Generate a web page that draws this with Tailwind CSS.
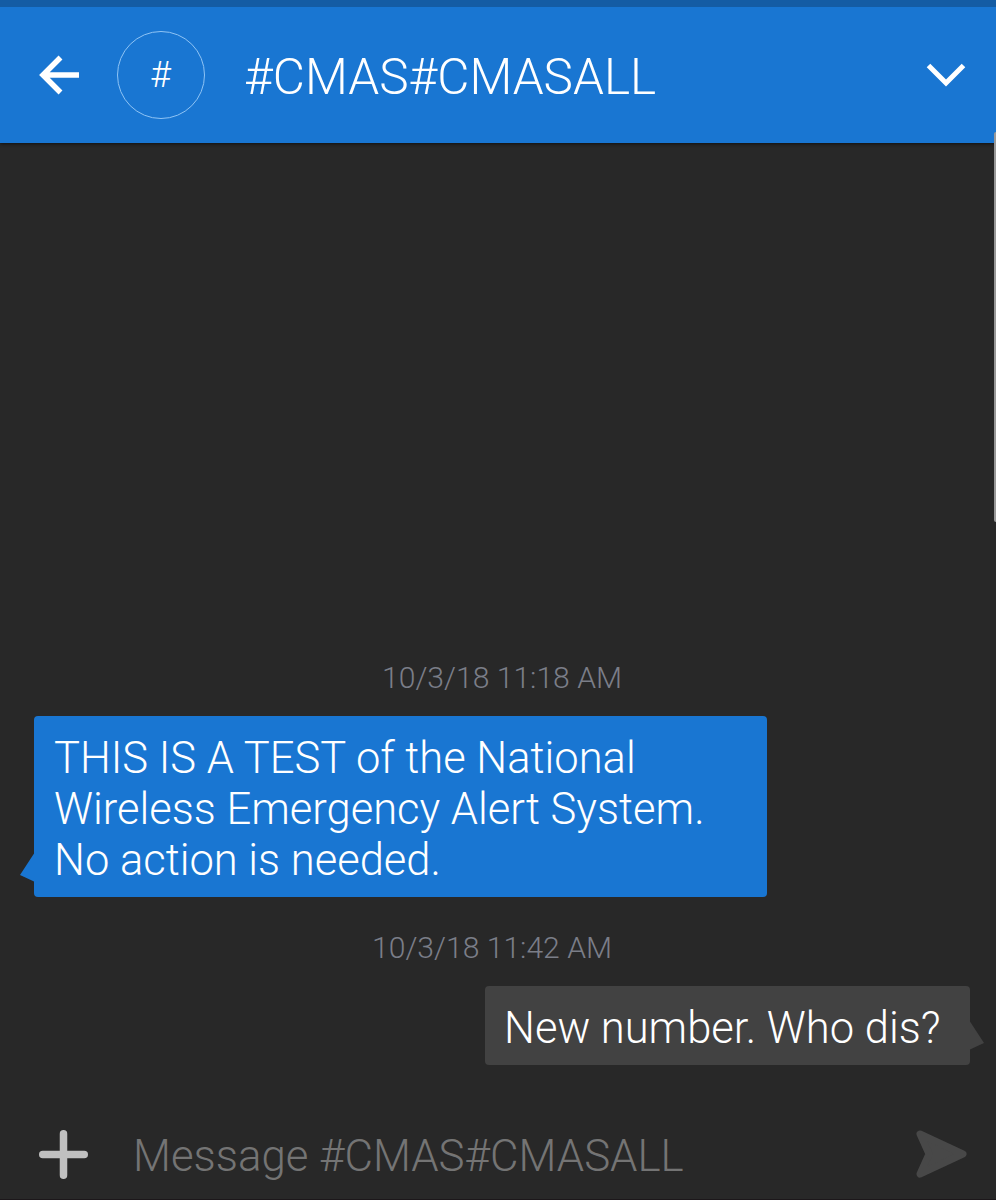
<!DOCTYPE html>
<html lang="en"><head><meta charset="utf-8"><title>Messages</title><script src="https://cdn.jsdelivr.net/npm/@tailwindcss/browser@4"></script></head>
<body class="bg-[#282828]">
<main class="relative flex h-[1200px] w-[996px] flex-col overflow-hidden bg-[#282828] font-['Roboto',sans-serif] font-light text-white">
<header class="flex h-[143px] shrink-0 items-center border-t-[7px] border-[#145ca4] bg-[#1976d2] pl-[39px] pr-[30px] shadow-[0_1px_3px_#111]">
<svg class="h-[40px] w-[40px]" viewBox="0 0 40 40" fill="none" stroke="white" stroke-width="5.500"><path d="M21.5 2.5 4 20l17.500 17.500M4 20h36"/></svg>
<div class="ml-[38px] flex size-[88px] items-center justify-center rounded-full border border-[#8fc4f5] pr-[1px] text-[36px]">#</div>
<h1 class="ml-[39px] pt-[3px] text-[49.500px] leading-[56px]">#CMAS#CMASALL</h1>
<svg class="ml-auto h-[24px] w-[40px]" viewBox="0 0 40 24" fill="none" stroke="white" stroke-width="5"><path d="M2.500 2.500 20 20 37.500 2.500"/></svg>
</header>
<section class="flex flex-1 flex-col">
<time class="mt-[517px] ml-[382px] text-[30.100px] leading-[36px] text-[#7b7e88]">10/3/18 11:18 AM</time>
<div class="relative mt-[20px] ml-[34px] h-[181px] w-[733px] rounded-[4px] bg-[#1976d2] pl-[20px] pt-[17px] text-[43.500px] leading-[51px]">THIS IS A TEST of the National<br>Wireless Emergency Alert System.<br>No action is needed.
<svg class="absolute bottom-[15px] left-[-14px] h-[30px] w-[15px]" viewBox="0 0 15 30"><path d="M15 0V30L14 29.500 0 23Z" fill="#1976d2"/></svg></div>
<time class="mt-[33px] ml-[372px] text-[30.100px] leading-[36px] text-[#7b7e88]">10/3/18 11:42 AM</time>
<div class="relative mt-[20px] ml-[485px] h-[79px] w-[485px] rounded-[4px] bg-[#424242] pl-[19px] pt-[17px] text-[43.500px] leading-[51px]">New number. Who dis?
<svg class="absolute right-[-14px] bottom-[15px] h-[30px] w-[15px]" viewBox="0 0 15 30"><path d="M0 0V30L1 29.500 15 23Z" fill="#424242"/></svg></div>
</section>
<footer class="flex h-[92px] shrink-0 items-center border-b border-[#1c171a] pt-[1px] pl-[39px] pr-[29px]">
<svg class="size-[49px]" viewBox="0 0 49 49" stroke="#c0c0c0" stroke-width="7.500" stroke-linecap="round"><path d="M24.500 3.750v41.500M3.750 24.500h41.500"/></svg>
<p class="ml-[45px] pt-[5px] text-[43.800px] leading-[51px] text-[#747474]">Message #CMAS#CMASALL</p>
<svg class="ml-auto h-[48px] w-[51px]" viewBox="0 0 51 48"><path d="M4 4 47 24 4 44 13 24Z" fill="#484848" stroke="#484848" stroke-width="7" stroke-linejoin="round"/></svg>
</footer>
<div class="absolute top-[132px] right-0 h-[390px] w-[2px] rounded-l bg-[#999]"></div>
</main></body></html>
